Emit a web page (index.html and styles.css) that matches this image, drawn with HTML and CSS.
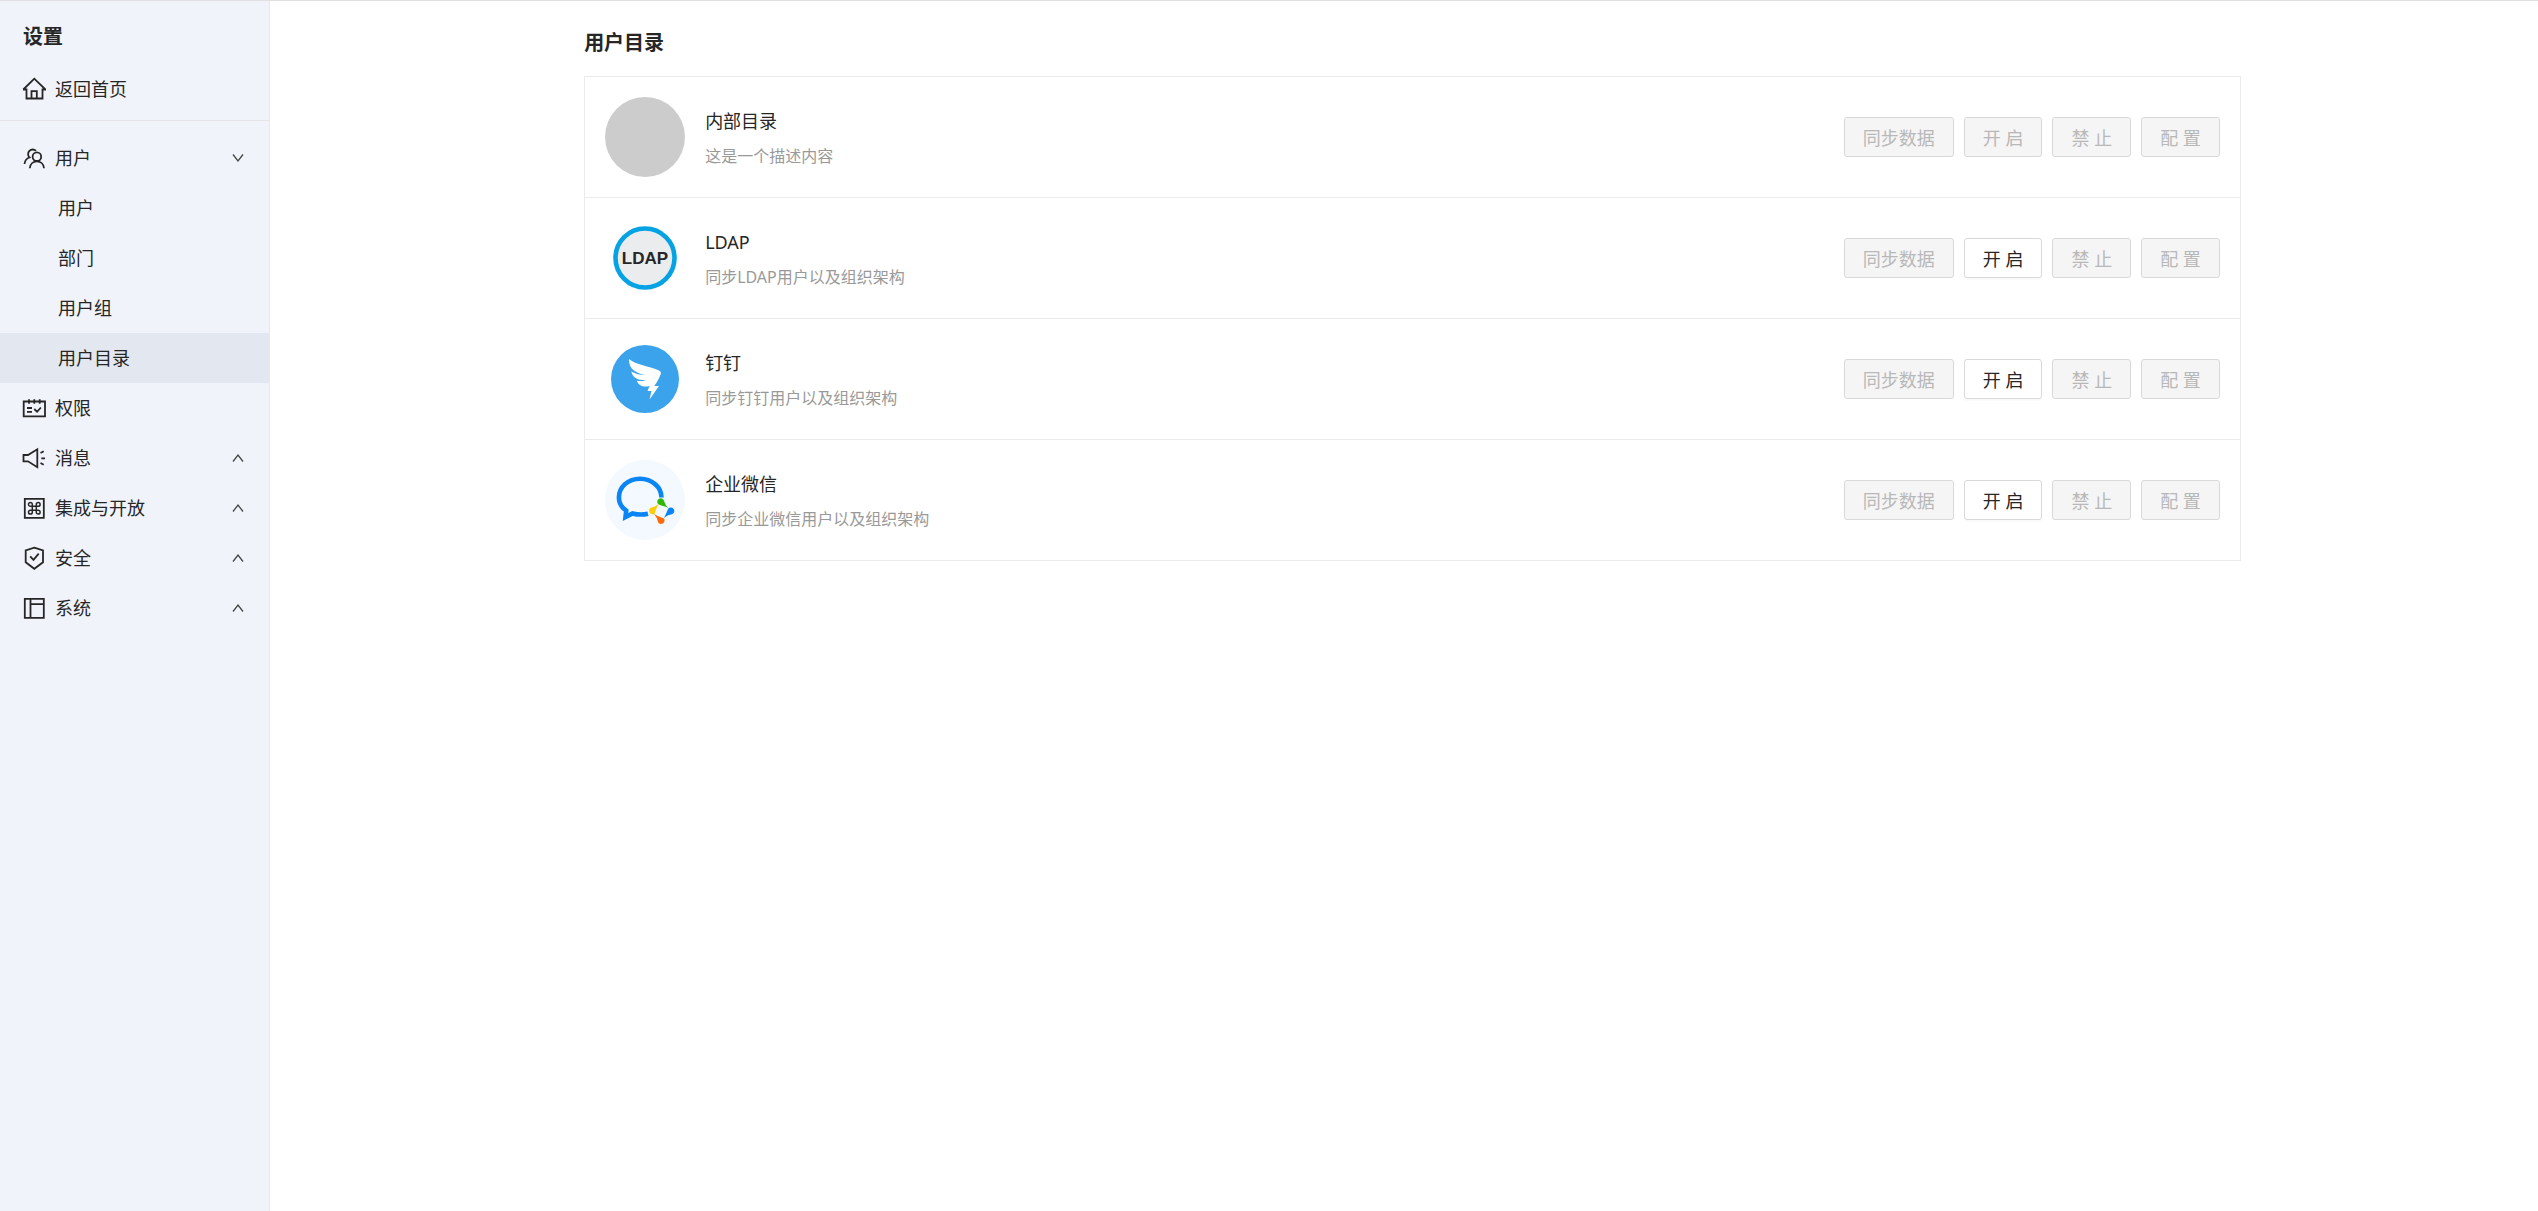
FILE: index.html
```html
<!DOCTYPE html>
<html lang="zh-CN">
<head>
<meta charset="UTF-8">
<meta name="viewport" content="width=device-width, initial-scale=1.0">
<title>用户目录</title>
<link rel="stylesheet" href="styles.css">
</head>
<body>

<div class="layout">
  <aside class="sidebar">
    <h2>设置</h2>
    <a class="menu-item" href="#home">
      <svg class="icon" viewBox="0 0 24 24"><path d="M1 12.5h3.5v9h16v-9h3L12.3 1.7 1.3 12.5M9.5 21.5v-7.3h5.3v7.3"/></svg>
      <span>返回首页</span>
    </a>
    <nav class="menu">
      <button class="menu-item" type="button">
        <svg class="icon" viewBox="0 0 24 24"><circle cx="14.9" cy="10.700" r="4.300"/><path d="M7.800 22.300c.6-9.200 13.600-9.200 14.200 0M14 4.800A4.500 4.500 0 1 0 7.500 11.500c-3 1-4.700 3.200-5 6.500"/></svg>
        <span>用户</span>
        <svg class="arrow" viewBox="0 0 12 12"><path d="M1 2.500l5 6.500 5-6.500"/></svg>
      </button>
      <a class="menu-item sub" href="#user">用户</a>
      <a class="menu-item sub" href="#department">部门</a>
      <a class="menu-item sub" href="#group">用户组</a>
      <a class="menu-item sub active" href="#directory">用户目录</a>
      <a class="menu-item" href="#permission">
        <svg class="icon" viewBox="0 0 24 24"><path d="M1.700 5.500h21.300v14.800H1.700zM7 3.300v4.400M12.300 3.300v4.400M17.700 3.300v4.400M5 12h5M5 15.800h5M12.300 13l2.800 2.800 3.800-4.300"/></svg>
        <span>权限</span>
      </a>
      <button class="menu-item" type="button">
        <svg class="icon" viewBox="0 0 24 24"><path d="M1.500 9H6l9.300-5.700v17.900L6 15.300H1.500zM18.500 7l3.200-1.700M19.300 12.300H23M18.500 17l3.200 1.700"/></svg>
        <span>消息</span>
        <svg class="arrow" viewBox="0 0 12 12"><path d="M1 9.500L6 3l5 6.500"/></svg>
      </button>
      <button class="menu-item" type="button">
        <svg class="icon" viewBox="0 0 24 24"><path d="M2.800 2.800h19v19h-19z"/><path class="thin" d="M10.300 10.300h4v4h-4zM10.300 10.300H8.500a1.900 1.900 0 1 1 1.800-1.900zM14.300 10.300V8.400a1.900 1.900 0 1 1 1.900 1.900zM14.300 14.300h1.900a1.900 1.900 0 1 1-1.900 1.900zM10.300 14.300v1.900a1.900 1.900 0 1 1-1.900-1.900z"/></svg>
        <span>集成与开放</span>
        <svg class="arrow" viewBox="0 0 12 12"><path d="M1 9.500L6 3l5 6.500"/></svg>
      </button>
      <button class="menu-item" type="button">
        <svg class="icon" viewBox="0 0 24 24"><path d="M12.300 1.700L21 4.300v12L12.300 22.800 3.700 16.300v-12zM8.200 10.300l3.300 3.500 5.200-6.100"/></svg>
        <span>安全</span>
        <svg class="arrow" viewBox="0 0 12 12"><path d="M1 9.500L6 3l5 6.500"/></svg>
      </button>
      <button class="menu-item" type="button">
        <svg class="icon" viewBox="0 0 24 24"><path d="M2.800 2.800h19v19h-19zM8.500 2.800v19M8.500 8.200h13.300"/></svg>
        <span>系统</span>
        <svg class="arrow" viewBox="0 0 12 12"><path d="M1 9.500L6 3l5 6.500"/></svg>
      </button>
    </nav>
  </aside>

  <main class="main">
    <div class="content">
      <h1>用户目录</h1>
      <ul class="directory-list">
        <li class="directory">
          <svg class="avatar" viewBox="0 0 80 80"><circle cx="40" cy="40" r="40" fill="#ccc"/></svg>
          <div class="info">
            <h3>内部目录</h3>
            <p>这是一个描述内容</p>
          </div>
          <div class="actions">
            <button type="button" disabled>同步数据</button>
            <button type="button" disabled>开 启</button>
            <button type="button" disabled>禁 止</button>
            <button type="button" disabled>配 置</button>
          </div>
        </li>
        <li class="directory">
          <svg class="avatar" viewBox="0 0 80 80">
            <circle cx="40" cy="40" r="29.500" fill="#ebecee" stroke="#06a3e4" stroke-width="4.600"/>
            <text class="ldap-text" x="40" y="46" text-anchor="middle">LDAP</text>
          </svg>
          <div class="info">
            <h3>LDAP</h3>
            <p>同步LDAP用户以及组织架构</p>
          </div>
          <div class="actions">
            <button type="button" disabled>同步数据</button>
            <button type="button">开 启</button>
            <button type="button" disabled>禁 止</button>
            <button type="button" disabled>配 置</button>
          </div>
        </li>
        <li class="directory">
          <svg class="avatar" viewBox="0 0 80 80">
            <circle cx="40" cy="40" r="34" fill="#3ba2ec"/>
            <path fill="#fff" d="M24 20C31 26 44 27 53.500 31.200c2.300 1 2.800 2.300 2 4.500C54 40 51.500 43.500 49.300 47H54L44.500 60.500l2-8.500h-4l2-5c-5 1.300-10.500.5-12.700-5.300 3 .6 6.500.5 9-.5-6.800.3-12.800-1.700-14.600-8.700 4.500 2.500 9 3.500 14 3.500C31.500 34 23.500 30.500 24 20z"/>
          </svg>
          <div class="info">
            <h3>钉钉</h3>
            <p>同步钉钉用户以及组织架构</p>
          </div>
          <div class="actions">
            <button type="button" disabled>同步数据</button>
            <button type="button">开 启</button>
            <button type="button" disabled>禁 止</button>
            <button type="button" disabled>配 置</button>
          </div>
        </li>
        <li class="directory">
          <svg class="avatar" viewBox="0 0 80 80">
            <circle cx="40" cy="40" r="40" fill="#f4f8ff"/>
            <path fill="none" stroke="#0985f5" stroke-width="4.600" d="M56.500 37.500C56.500 27 47 18.700 35 18.700S13.900 27 13.900 37.500c0 5.500 2.800 10 7.300 13.200L20.500 57l7-3.600c5 1.300 10.500 1.500 15.500.3"/>
            <path fill="#2fb80b" d="M53.300 44.300a3.500 3.500 0 1 1 5.800-3.500C59.700 43 60.500 45.500 63.500 48.300 59.500 46 56.500 45.700 53.300 44.300z"/>
            <path fill="#0985f5" d="M63.300 48.500a3.500 3.500 0 1 1 3.500 5.800C64.500 54.700 62 55.500 58.700 58 61.300 54.500 61.700 51.500 63.300 48.500z"/>
            <path fill="#ff6a0a" d="M59 58.500a3.500 3.500 0 1 1-6.100 3.400C52.500 59.500 51.500 57 48.700 53.800 52.500 56.300 55.500 57 59 58.500z"/>
            <path fill="#ffcc0a" d="M49.500 53.700a3.500 3.500 0 1 1-3.500-6.100C48.300 47.200 50.500 46.300 54 43.800 51.300 47.500 51 50.500 49.500 53.700z"/>
          </svg>
          <div class="info">
            <h3>企业微信</h3>
            <p>同步企业微信用户以及组织架构</p>
          </div>
          <div class="actions">
            <button type="button" disabled>同步数据</button>
            <button type="button">开 启</button>
            <button type="button" disabled>禁 止</button>
            <button type="button" disabled>配 置</button>
          </div>
        </li>
      </ul>
    </div>
  </main>
</div>

</body>
</html>
```
FILE: styles.css
```css
* {
  box-sizing: border-box;
}
body {
  margin: 0;
  font-family: "Noto Sans", "Noto Sans CJK SC", sans-serif;
  font-size: 18px;
  color: #262626;
  background-color: #fff;
}
h1, h2, h3, p, ul {
  margin: 0;
  padding: 0;
}
button {
  font: inherit;
  cursor: pointer;
}

.layout {
  display: flex;
  min-height: 100vh;
  border-top: 1px solid #e0e0e0;
}

/* sidebar */
.sidebar {
  flex: none;
  width: 270px;
  background-color: #f0f3fa;
  border-right: 1px solid #e8e8e8;
}
.sidebar h2 {
  padding: 20px 23px 11px;
  font-size: 20px;
  line-height: 32px;
}
.menu {
  margin-top: 6px;
  padding-top: 12px;
  border-top: 1px solid #e4e4e4;
}
.menu-item {
  display: flex;
  align-items: center;
  gap: 9px;
  width: 100%;
  height: 50px;
  padding: 0 25px 0 22px;
  border: none;
  background: none;
  color: #262626;
  text-align: left;
  text-decoration: none;
}
.menu-item span {
  padding-bottom: 2px;
}
.menu-item.sub {
  padding-left: 58px;
  padding-bottom: 2px;
}
.menu-item.active {
  background-color: #e3e7ef;
}
.icon {
  width: 24px;
  height: 24px;
  fill: none;
  stroke: #262626;
  stroke-width: 1.8;
}
.icon .thin {
  stroke-width: 1.5;
}
.arrow {
  width: 12px;
  height: 12px;
  margin-left: auto;
  fill: none;
  stroke: #444;
  stroke-width: 1.3;
}

/* directory list */
.main {
  flex: 1;
  padding-left: 17px;
}
.content {
  width: 73.6%;
  margin: 0 auto;
  padding-top: 26px;
}
h1 {
  margin-bottom: 17px;
  font-size: 20px;
  line-height: 32px;
}
.directory-list {
  list-style: none;
  border: 1px solid #ebebeb;
}
.directory {
  display: flex;
  align-items: center;
  gap: 20px;
  padding: 20px;
}
.directory + .directory {
  border-top: 1px solid #ebebeb;
}
.avatar {
  flex: none;
  width: 80px;
  height: 80px;
}
.ldap-text {
  font: bold 17px "Liberation Sans", Arial, sans-serif;
  fill: #262626;
}
.info {
  flex: 1;
  padding-top: 2px;
}
.info h3 {
  font-size: 18px;
  font-weight: normal;
  line-height: 28px;
}
.info p {
  margin-top: 7px;
  font-size: 16px;
  line-height: 28px;
  color: #999;
}
.actions {
  display: flex;
  gap: 10px;
}
.actions button {
  height: 40px;
  padding: 0 18px 1px;
  border: 1px solid #d9d9d9;
  border-radius: 3px;
  background-color: #fff;
  color: #262626;
  box-shadow: 0 2px 0 rgba(0, 0, 0, 0.02);
}
.actions button:disabled {
  background-color: #f5f5f5;
  color: #b8b8b8;
  box-shadow: none;
  cursor: not-allowed;
}
```
